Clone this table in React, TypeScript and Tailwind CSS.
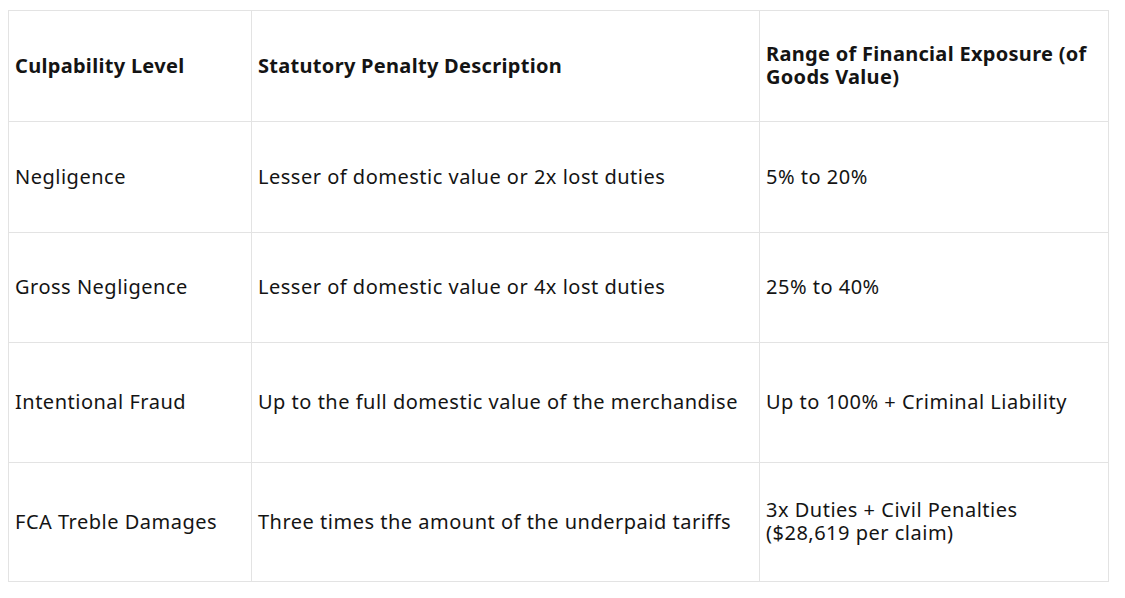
const rows: [string, string, string][] = [
  ['Negligence', 'Lesser of domestic value or 2x lost duties', '5% to 20%'],
  ['Gross Negligence', 'Lesser of domestic value or 4x lost duties', '25% to 40%'],
  ['Intentional Fraud', 'Up to the full domestic value of the merchandise', 'Up to 100% + Criminal Liability'],
  ['FCA Treble Damages', 'Three times the amount of the underpaid tariffs', '3x Duties + Civil Penalties ($28,619 per claim)'],
]

const heights = ['h-[111px]', 'h-[110px]', 'h-[120px]', 'h-[119px]']

export default function App() {
  return (
    <div className="min-h-screen bg-white pl-[8px] pt-[10px]" style={{ fontFamily: '"Noto Sans", sans-serif' }}>
      <table className="w-[1100px] table-fixed border-collapse text-[20px] leading-[23px] text-[#141414]">
        <colgroup>
          <col className="w-[243px]" />
          <col className="w-[508px]" />
          <col className="w-[349px]" />
        </colgroup>
        <thead>
          <tr className="h-[111px] tracking-[0.3px]">
            <th className="border border-[#e3e3e3] px-[6px] pb-[2px] text-left align-middle font-bold">Culpability Level</th>
            <th className="border border-[#e3e3e3] px-[6px] pb-[2px] text-left align-middle font-bold">Statutory Penalty Description</th>
            <th className="border border-[#e3e3e3] px-[6px] pb-[2px] text-left align-middle font-bold">Range of Financial Exposure (of Goods Value)</th>
          </tr>
        </thead>
        <tbody>
          {rows.map((r, i) => (
            <tr key={i} className={`${heights[i]} tracking-[0.5px]`}>
              {r.map((c, j) => (
                <td key={j} className="border border-[#e3e3e3] px-[6px] pb-[2px] align-middle">{c}</td>
              ))}
            </tr>
          ))}
        </tbody>
      </table>
    </div>
  )
}
